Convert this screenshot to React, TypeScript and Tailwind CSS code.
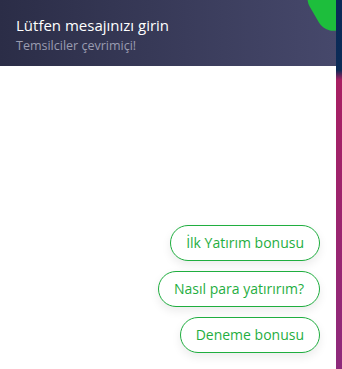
import React from "react";

const font = { fontFamily: '"Open Sans", "Noto Sans", sans-serif' };

function Chip({ label }: { label: string }) {
  return (
    <button
      className="h-[36px] rounded-full border border-[#1fae3f] bg-white px-[15px] text-[14px] text-[#1fae3f] shadow-[0_4px_10px_rgba(0,0,0,0.08)] leading-none"
      style={font}
    >
      {label}
    </button>
  );
}

export default function App() {
  return (
    <div
      className="relative flex h-[369px] w-[342px] overflow-hidden bg-[linear-gradient(to_bottom,#0a2a58_0px,#0b2b57_70px,#a81f62_80px,#8e2a7c_369px)]"
      style={font}
    >
      <div className="relative flex h-full w-[336px] flex-col overflow-hidden bg-white">
        <div className="relative flex h-[66px] flex-col bg-[linear-gradient(to_right,#2b2d47,#46486b)] pl-4 pt-[15px]">
          <div className="text-[15px] leading-[20px] text-white">Lütfen mesajınızı girin</div>
          <div className="mt-[2px] text-[12.5px] leading-[18px] text-[#9a9cb0]">Temsilciler çevrimiçi!</div>
          <div className="absolute right-[-10px] top-[-20px] h-[52px] w-[34px] rotate-[-30deg] rounded-full bg-[#1dbe3c]" />
        </div>
        <div className="flex flex-1 flex-col items-end justify-end gap-[10px] px-4 pb-4">
          <Chip label="İlk Yatırım bonusu" />
          <Chip label="Nasıl para yatırırım?" />
          <Chip label="Deneme bonusu" />
        </div>
      </div>
    </div>
  );
}
